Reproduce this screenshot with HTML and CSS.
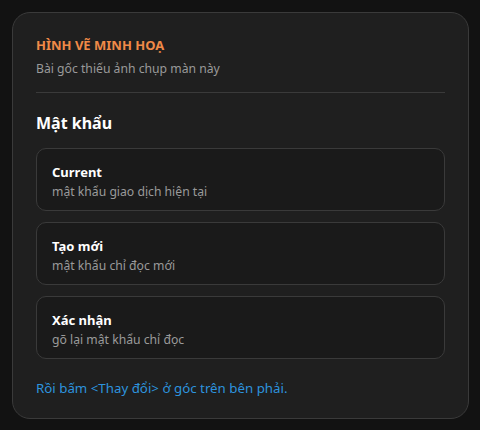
FILE: index.html
```html
<!DOCTYPE html>
<html lang="vi">
<head>
<meta charset="utf-8">
<link rel="stylesheet" href="styles.css">
</head>
<body>
<div class="card">
  <div class="kicker">HÌNH VẼ MINH HOẠ</div>
  <div class="sub">Bài gốc thiếu ảnh chụp màn này</div>
  <div class="divider"></div>
  <h2 class="heading">Mật khẩu</h2>
  <div class="fields">
    <div class="field">
      <div class="label">Current</div>
      <div class="hint">mật khẩu giao dịch hiện tại</div>
    </div>
    <div class="field">
      <div class="label">Tạo mới</div>
      <div class="hint">mật khẩu chỉ đọc mới</div>
    </div>
    <div class="field">
      <div class="label">Xác nhận</div>
      <div class="hint">gõ lại mật khẩu chỉ đọc</div>
    </div>
  </div>
  <div class="footer">Rồi bấm &lt;Thay đổi&gt; ở góc trên bên phải.</div>
</div>
</body>
</html>
```
FILE: styles.css
```css
html, body {
  margin: 0;
  padding: 0;
  background: #121212;
}
body {
  padding: 12px 11px 12px 12px;
  font-family: "Noto Sans", "Open Sans", sans-serif;
  font-size: 13px;
  line-height: 18px;
  color: #e8e8e8;
}
.card {
  background: #1f1f1f;
  border: 1px solid #3a3a3a;
  border-radius: 18px;
  padding: 23px 23px 21px 23px;
}
.kicker {
  color: #f08a48;
  font-weight: 700;
  font-size: 13px;
}
.sub {
  color: #9a9a9a;
  font-size: 12.2px;
  margin-top: 6px;
}
.divider {
  height: 1px;
  background: #3a3a3a;
  margin-top: 14px;
}
.heading {
  margin: 19px 0 0;
  font-size: 16px;
  line-height: 22px;
  font-weight: 700;
  color: #ffffff;
}
.fields {
  margin-top: 14px;
  display: flex;
  flex-direction: column;
  gap: 11px;
}
.field {
  background: #1a1a1a;
  border: 1px solid #3a3a3a;
  border-radius: 10px;
  padding: 14px 15px 9px;
}
.label {
  font-weight: 700;
  color: #ffffff;
}
.hint {
  color: #9a9a9a;
  font-size: 12.2px;
  margin-top: 2px;
}
.footer {
  margin-top: 20px;
  font-size: 13.3px;
  color: #2d93de;
}
```
